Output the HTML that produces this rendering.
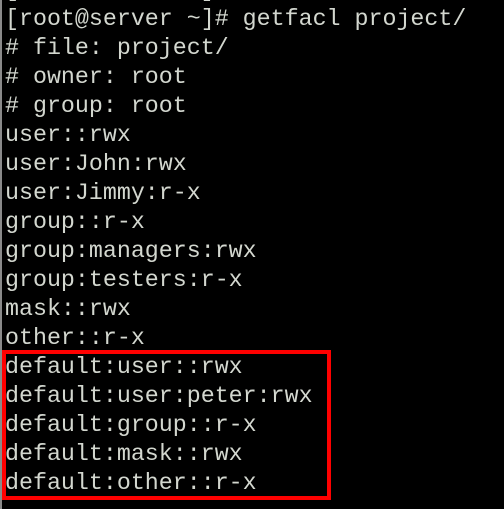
<!DOCTYPE html>
<html><head><style>
html,body{margin:0;padding:0;background:#000;width:504px;height:509px;overflow:hidden}
body{position:relative}
.t{position:absolute;left:5px;top:-24px;font-family:"Liberation Mono",monospace;font-size:23.3px;line-height:29px;color:#d3d7cf;white-space:pre}
.edge{position:absolute;left:0;top:0;width:2px;height:509px;background:#8a8a8a}
.box{position:absolute;left:2px;top:350px;width:321px;height:142px;border:4px solid #f00}
</style></head><body>
<div class="edge"></div>
<div class="t">[root@server ~]# ls
[root@server ~]# getfacl project/
# file: project/
# owner: root
# group: root
user::rwx
user:John:rwx
user:Jimmy:r-x
group::r-x
group:managers:rwx
group:testers:r-x
mask::rwx
other::r-x
default:user::rwx
default:user:peter:rwx
default:group::r-x
default:mask::rwx
default:other::r-x</div>
<div class="box"></div>
</body></html>
